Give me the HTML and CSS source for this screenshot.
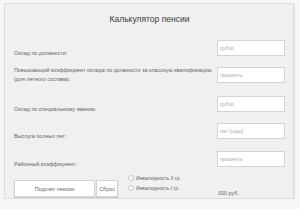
FILE: index.html
```
<!DOCTYPE html>
<html lang="ru">
<head>
    <meta charset="UTF-8">
    <title>Калькулятор пенсии</title>
    <link rel="stylesheet" href="styles.css">
</head>
<body>
    <div class="calc">
        <h1 class="calc-title">Калькулятор пенсии</h1>
        <div class="row r1">
            <label class="lbl">Оклад по должности:</label>
            <input class="fld" type="text" placeholder="рубли">
        </div>
        <div class="row r2">
            <label class="lbl">Повышающий коэффициент оклада по должности за классную квалификацию<br>(для летного состава):</label>
            <input class="fld" type="text" placeholder="проценты">
        </div>
        <div class="row r3">
            <label class="lbl">Оклад по специальному званию:</label>
            <input class="fld" type="text" placeholder="рубли">
        </div>
        <div class="row r4">
            <label class="lbl">Выслуга полных лет:</label>
            <input class="fld" type="text" placeholder="лет (годы)">
        </div>
        <div class="row r5">
            <label class="lbl">Районный коэффициент:</label>
            <input class="fld" type="text" placeholder="проценты">
        </div>
        <div class="bottom">
            <button class="btn btn-calc">Подсчет пенсии</button>
            <button class="btn btn-reset">Сброс</button>
            <div class="radios">
                <label class="radio"><span class="dot"></span>Инвалидность II гр.</label>
                <label class="radio"><span class="dot"></span>Инвалидность I гр.</label>
            </div>
            <div class="result">000 руб.</div>
        </div>
    </div>
</body>
</html>
```

FILE: styles.css
```
body {
    margin: 0;
    padding: 3px 0 0 4px;
    background: #f6f6f6;
    font-family: Arial, "Liberation Sans", sans-serif;
}
.calc {
    width: 290px;
    height: 196px;
    box-sizing: border-box;
    background: #f0f0f0;
    border: 1px solid #dcdcdc;
    box-shadow: 1px 1px 1px #e6e6e6;
    padding: 0 8px 0 9px;
}
.calc-title {
    margin: 0;
    height: 36px;
    line-height: 31px;
    text-align: center;
    font-size: 8.5px;
    font-weight: normal;
    color: #3a3a3a;
}
.row {
    display: flex;
    align-items: center;
    justify-content: space-between;
    height: 16px;
}
.r2 { margin-top: 11px; }
.r3 { margin-top: 13px; }
.r4 { margin-top: 11px; }
.r5 { margin-top: 12px; }
.lbl {
    font-size: 5.4px;
    line-height: 9px;
    color: #666;
}
.r1 .lbl, .r3 .lbl, .r4 .lbl, .r5 .lbl {
    position: relative;
    top: 5px;
}
.fld {
    width: 68px;
    height: 16px;
    box-sizing: border-box;
    margin: 0;
    padding: 0 2px;
    border: 1px solid #d4d4d4;
    background: #fff;
    font-family: inherit;
    font-size: 5px;
    color: #555;
    outline: none;
}
.fld::placeholder {
    color: #aaa;
}
.bottom {
    display: flex;
    align-items: flex-start;
    margin-top: 13px;
}
.btn {
    height: 17px;
    box-sizing: border-box;
    margin: 0;
    padding: 0;
    background: #fff;
    border: 1px solid #d2d2d2;
    box-shadow: 0 1px 1px #cfcfcf;
    font-family: inherit;
    font-size: 5.4px;
    color: #666;
}
.btn-calc {
    width: 81px;
}
.btn-reset {
    width: 22px;
    margin-left: 1px;
}
.radios {
    margin-left: 10px;
    margin-top: -7px;
}
.radio {
    display: flex;
    align-items: center;
    height: 10px;
    font-size: 5px;
    color: #666;
}
.dot {
    width: 4px;
    height: 4px;
    border: 1px solid #c8c8c8;
    border-radius: 50%;
    background: #f8f8f8;
    margin-right: 2px;
}
.result {
    width: 67px;
    margin-left: auto;
    margin-top: 10px;
    font-size: 5.4px;
    color: #666;
}
```
